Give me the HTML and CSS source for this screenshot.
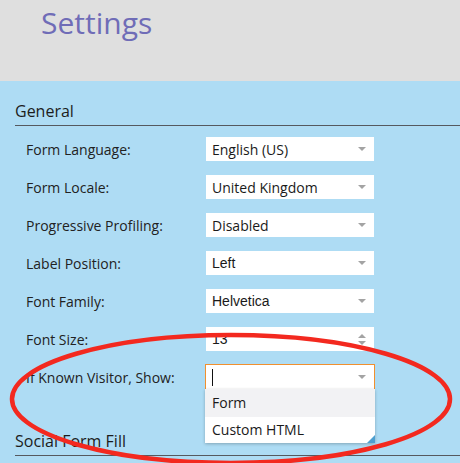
FILE: index.html
```html
<!DOCTYPE html>
<html lang="en">
<head>
<meta charset="utf-8">
<title>Settings</title>
<link rel="stylesheet" href="styles.css">
</head>
<body>
<header class="top">
  <h1 class="page-title">Settings</h1>
</header>
<main class="content">
  <h2 class="section-title">General</h2>
  <div class="rows">
    <div class="row">
      <span class="label">Form Language:</span>
      <div class="select"><span class="value">English (US)</span><span class="caret"></span></div>
    </div>
    <div class="row">
      <span class="label">Form Locale:</span>
      <div class="select"><span class="value">United Kingdom</span><span class="caret"></span></div>
    </div>
    <div class="row">
      <span class="label">Progressive Profiling:</span>
      <div class="select"><span class="value">Disabled</span><span class="caret"></span></div>
    </div>
    <div class="row">
      <span class="label">Label Position:</span>
      <div class="select"><span class="value value-sans">Left</span><span class="caret"></span></div>
    </div>
    <div class="row">
      <span class="label">Font Family:</span>
      <div class="select"><span class="value value-sans">Helvetica</span><span class="caret"></span></div>
    </div>
    <div class="row">
      <span class="label">Font Size:</span>
      <div class="select"><span class="value value-sans">13</span><span class="spinner"><span class="spin-up"></span><span class="spin-down"></span></span></div>
    </div>
    <div class="row">
      <span class="label">If Known Visitor, Show:</span>
      <div class="select select-active">
        <span class="cursor"></span><span class="caret"></span>
        <ul class="menu">
          <li class="menu-item menu-item-hover">Form</li>
          <li class="menu-item">Custom HTML</li>
        </ul>
      </div>
    </div>
  </div>
  <h2 class="section-title section-title-next">Social Form Fill</h2>
</main>
<svg class="annotation" width="460" height="463" viewBox="0 0 460 463">
  <ellipse cx="231" cy="399" rx="219" ry="64" fill="none" stroke="#f3291f" stroke-width="4.5"/>
</svg>
</body>
</html>
```
FILE: styles.css
```css
html, body {
  margin: 0;
  padding: 0;
}
body {
  width: 460px;
  height: 463px;
  overflow: hidden;
  position: relative;
  background: #aedcf4;
  font-family: "Open Sans", "Noto Sans", sans-serif;
  color: #222;
}
.top {
  height: 81px;
  background: #dfdfdf;
  padding-left: 41px;
  box-sizing: border-box;
  padding-top: 3px;
}
.page-title {
  margin: 0;
  font-size: 30px;
  line-height: 40px;
  font-weight: 400;
  color: #6f6cb7;
}
.content {
  padding-left: 15px;
}
.section-title {
  margin: 19px 0 0;
  padding-bottom: 3px;
  font-size: 16px;
  line-height: 22px;
  font-weight: 400;
  color: #1c1c1c;
  border-bottom: 1px solid #55595f;
}
.section-title-next {
  margin-top: 40px;
}
.rows {
  display: flex;
  flex-direction: column;
  gap: 12px;
  padding-top: 10px;
  padding-left: 11px;
}
.row {
  display: flex;
  align-items: center;
  height: 26px;
}
.label {
  width: 179px;
  font-size: 14px;
  color: #222;
}
.select {
  position: relative;
  width: 170px;
  height: 26px;
  box-sizing: border-box;
  border: 1px solid transparent;
  background: #fff;
  background-clip: padding-box;
  display: flex;
  align-items: center;
  padding: 0 8px 0 6px;
}
.value {
  flex: 1;
  font-size: 14px;
  color: #1a1a1a;
}
.value-sans {
  font-family: "Liberation Sans", Arial, sans-serif;
}
.caret {
  margin-left: auto;
  width: 0;
  height: 0;
  border-left: 4px solid transparent;
  border-right: 4px solid transparent;
  border-top: 4px solid #a3a3a3;
  margin-top: -1px;
}
.spinner {
  margin-left: auto;
  display: flex;
  flex-direction: column;
  gap: 3px;
}
.spin-up {
  width: 0;
  height: 0;
  border-left: 4px solid transparent;
  border-right: 4px solid transparent;
  border-bottom: 4px solid #a3a3a3;
}
.spin-down {
  width: 0;
  height: 0;
  border-left: 4px solid transparent;
  border-right: 4px solid transparent;
  border-top: 4px solid #a3a3a3;
}
.select-active {
  border-color: #f0902f;
}
.cursor {
  width: 1px;
  height: 17px;
  background: #111;
}
.menu {
  position: absolute;
  left: -1px;
  right: -1px;
  top: 24px;
  margin: 0;
  padding: 0;
  list-style: none;
  background: #fff;
  box-shadow: 0 1px 3px rgba(0, 0, 0, 0.25);
  z-index: 2;
}
.menu::after {
  content: "";
  position: absolute;
  right: 0;
  bottom: 0;
  width: 0;
  height: 0;
  border-left: 8px solid transparent;
  border-bottom: 8px solid #4d9fd0;
}
.menu-item {
  font-size: 14px;
  line-height: 26px;
  padding-left: 7px;
  color: #1a1a1a;
}
.menu-item-hover {
  background: #f2f2f4;
  line-height: 28px;
}
.annotation {
  position: absolute;
  left: 0;
  top: 0;
  z-index: 5;
  pointer-events: none;
}
```
